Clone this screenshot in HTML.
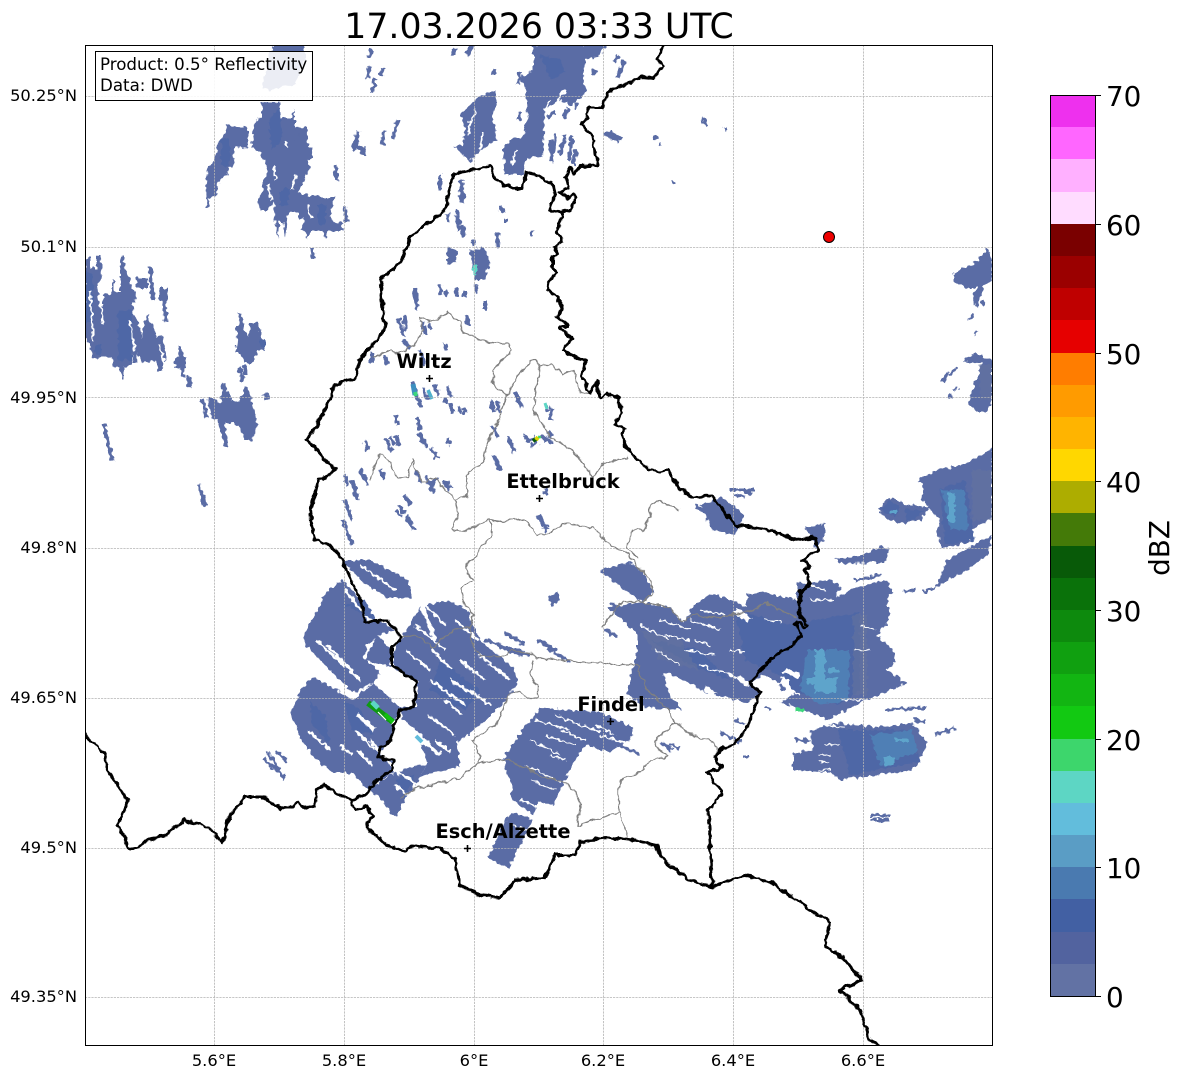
<!DOCTYPE html>
<html><head><meta charset="utf-8"><title>Radar</title>
<style>
html,body{margin:0;padding:0;background:#fff;width:1184px;height:1081px;overflow:hidden}
svg{display:block}
text{font-family:"DejaVu Sans",sans-serif;fill:#000}
.tk{font-size:16.3px}
.cb{font-size:27.8px}
.lb{font-size:19.4px;font-weight:bold;text-anchor:middle}
</style></head><body>
<svg width="1184" height="1081" viewBox="0 0 1184 1081" xmlns="http://www.w3.org/2000/svg">
<defs>
<clipPath id="ax"><rect x="85" y="45" width="907" height="1001"/></clipPath>
<filter id="w" filterUnits="userSpaceOnUse" x="0" y="0" width="1184" height="1081" color-interpolation-filters="sRGB"><feTurbulence type="fractalNoise" baseFrequency=".14" numOctaves="2" seed="4"/><feDisplacementMap in="SourceGraphic" scale="6" xChannelSelector="R" yChannelSelector="G"/></filter>
<filter id="r" filterUnits="userSpaceOnUse" x="0" y="0" width="1184" height="1081" color-interpolation-filters="sRGB"><feTurbulence type="fractalNoise" baseFrequency=".25" numOctaves="1" seed="9"/><feDisplacementMap in="SourceGraphic" scale="7" xChannelSelector="R" yChannelSelector="G"/></filter>
</defs>
<rect width="1184" height="1081" fill="#fff"/>
<g clip-path="url(#ax)">
<!-- radar base -->
<g filter="url(#r)">
<g fill="#5a6ca5">
<polygon points="227,125 248,128 248,148 235,147 233,167 228,168 227,177 222,177 217,188 216,197 208,198 210,208 207,208 206,187 208,167 213,163 218,145 223,135"/>
<polygon points="262,102 280,103 278,118 292,118 295,108 295,127 307,128 308,147 313,148 312,158 307,160 310,167 303,183 298,193 307,195 327,197 335,197 333,205 330,213 333,222 343,223 342,231 327,231 325,239 322,231 310,231 308,239 305,231 302,230 304,217 298,220 298,212 288,212 287,220 285,239 283,222 279,222 278,239 275,220 274,203 267,210 260,210 257,200 263,190 262,182 268,172 265,163 260,152 251,147 255,120 262,118"/>
<polygon points="273,45 305,45 305,60 295,85 270,90 262,88 268,60"/>
<polygon points="87,257 90,257 90,268 97,268 97,255 101,255 102,280 98,282 100,305 103,307 103,295 112,293 112,280 114,280 114,292 120,292 120,268 122,255 124,255 124,267 130,280 132,290 136,292 135,303 132,303 133,313 138,320 142,338 143,328 148,313 152,325 157,337 162,335 166,357 162,372 158,370 155,360 142,363 138,353 137,363 133,363 132,355 132,365 124,367 124,379 121,379 120,368 113,367 112,357 93,358 91,347 87,340 85,330 85,270"/>
<rect x="136" y="278" width="12" height="10"/><rect x="159" y="288" width="9" height="12"/><rect x="175" y="357" width="10" height="11"/>
<polygon points="235,325 242,323 248,337 250,323 257,322 262,337 265,350 258,350 252,363 245,363 242,353 235,353 237,337"/>
<polygon points="207,397 213,397 220,403 223,382 232,400 240,400 245,387 248,387 258,425 252,440 245,440 240,427 232,423 225,423 228,447 225,447 217,420 212,417"/>
<polygon points="533,45 607,45 600,55 585,60 583,85 587,90 580,98 572,105 558,100 545,110 543,157 527,158 523,175 505,175 503,150 513,137 522,137 528,120 525,85 520,78 533,70"/>
<polygon points="477,98 495,90 498,103 492,113 497,140 477,153 470,162 455,147 463,145 465,127 460,115"/>
<polygon points="603,135 610,130 621,137 618,143"/>
<polygon points="447,247 457,250 456,262 447,265"/>
<polygon points="470,250 484,248 490,262 484,280 474,280"/>
<!-- lower-left -->
<polygon points="290,712 303,687 313,677 337,690 353,700 373,683 400,707 395,723 390,742 378,753 393,762 392,773 367,790 353,773 333,773 313,757 300,737"/>
<polygon points="393,773 427,763 420,777 413,787 395,817 380,800 370,790"/>
<polygon points="304,638 313,617 328,590 343,580 363,603 367,623 380,620 395,630 380,635 367,645 363,657 380,673 373,683 353,693 323,663 307,647"/>
<polygon points="343,560 370,560 408,580 412,598 390,598 380,593 363,583"/>
<polygon points="393,653 420,607 447,600 467,610 480,640 513,667 518,683 500,707 470,733 457,743 460,767 430,773 420,777 427,763 417,730 403,720 400,707 417,707 417,682 393,667"/>
<polygon points="365,660 377,635 393,650 390,667"/>
<polygon points="540,708 600,712 635,728 630,740 610,752 585,745 570,770 553,805 537,802 533,815 510,797 513,787 507,773 503,760 520,733"/>
<polygon points="510,812 533,820 513,860 508,868 488,858"/>
<polygon points="548,597 558,592 560,600 552,606"/>
<polygon points="600,570 630,562 643,573 653,592 643,602 625,590"/>
<!-- right -->
<polygon points="607,607 643,602 672,608 683,623 697,602 713,593 747,607 747,595 763,592 797,600 797,583 833,580 840,587 837,597 857,587 887,580 893,593 887,600 890,620 877,635 893,650 895,663 887,670 907,683 860,703 827,720 803,710 780,702 800,690 800,680 783,675 780,683 763,675 750,683 760,692 747,703 707,693 677,677 663,673 670,697 683,710 643,707 627,693 637,650 637,633"/>
<polygon points="810,730 837,723 877,727 913,723 927,743 920,760 912,770 867,777 838,780 833,773 793,770 793,755 813,750"/>
<polygon points="700,505 722,497 745,515 735,535 712,530"/>
<polygon points="805,527 825,523 825,538 815,548"/>
<polygon points="918,480 937,470 963,465 992,448 992,517 973,530 970,542 942,548 937,532 940,520 922,500 923,483"/>
<polygon points="878,510 888,497 893,502 923,507 930,507 920,520 905,523 900,523 888,520"/>
<polygon points="947,560 992,535 988,555 967,570 935,588"/>
<polygon points="835,558 860,556 880,547 890,548 885,563 867,563 840,564"/>
<polygon points="952,275 963,268 977,262 987,248 992,258 992,280 983,287 977,307 972,297 977,288 967,288 955,282"/>
<polygon points="963,362 975,353 992,360 992,400 987,412 977,412 968,402 975,383 982,363"/>
<polygon points="885,505 892,497 902,503 899,516 888,515"/>
</g>
<!-- small radar cells -->
<path fill="none" stroke="#5a6ca5" stroke-width="4" d="M297,130L299,155 M150,267L153,300 M164,300L166,323 M180,345L183,378 M188,378L190,388 M335,165L337,180 M345,205L346,222 M312,248L313,258 M358,132L354,150 M352,145L364,150 M362,150L364,155 M372,50L369,57 M370,66L367,78 M383,68L381,76 M375,78L372,93 M398,120L393,138 M385,130L382,145 M240,313L242,325 M239,367L243,380 M244,366L246,375 M104,424L112,460 M202,398L207,418 M265,393L267,400 M188,375L191,386 M198,484L206,506 M230,400L250,440 M455,48L452,56 M472,45L467,55 M495,70L492,75 M520,72L518,85 M618,55L614,62 M624,60L618,78 M595,70L592,75 M550,140L553,155 M556,135L551,162 M565,135L560,155 M572,135L569,160 M576,150L573,165 M520,112L519,120 M543,112L542,120 M577,102L575,108 M555,112L548,117 M569,108L563,118 M447,213L448,222 M462,180L461,200 M457,210L459,230 M462,225L464,238 M473,240L474,247 M463,193L462,203 M497,233L498,247 M440,175L440,190 M500,205L503,213 M506,218L506,223 M532,230L531,236 M440,285L441,295 M456,288L457,297 M465,290L465,297 M415,288L417,310 M404,316L406,330 M422,322L426,335 M445,290L448,295 M466,315L468,325 M475,285L477,292 M485,300L485,310 M372,352L372,363 M385,355L387,365 M398,318L404,336 M402,340L410,348 M420,350L425,365 M445,343L446,350 M445,398L447,404 M428,324L432,330 M464,408L466,414 M412,382L418,400 M423,388L428,400 M435,385L438,395 M447,385L451,398 M418,397L421,407 M450,403L453,412 M458,405L461,413 M395,415L398,425 M396,435L399,445 M417,417L420,430 M419,433L427,448 M431,448L437,458 M447,437L450,445 M416,470L420,482 M390,437L395,445 M385,438L392,452 M365,440L368,450 M490,400L495,412 M497,402L500,413 M515,392L522,408 M492,425L498,438 M508,436L514,452 M493,455L500,470 M443,481L449,490 M436,477L431,487 M425,476L434,492 M445,481L451,488 M404,495L411,505 M400,507L404,513 M406,515L414,530 M552,408L550,420 M524,435L529,441 M528,442L535,437 M530,446L538,442 M545,436L552,444 M546,407L548,412 M543,435L546,442 M548,432L552,437 M544,488L547,495 M538,515L546,527 M544,527L548,530 M345,475L348,485 M343,520L352,545 M360,470L368,485 M380,470L385,480 M352,480L358,500 M345,500L352,520"/>
<path fill="none" stroke="#5a6ca5" stroke-width="3" d="M276,750L287,762 M267,752L280,770 M275,765L285,780 M395,510L402,517 M885,710L925,708 M870,815L890,816 M870,820L890,820 M795,740L810,741 M800,752L840,754 M945,580L955,570 M956,368L950,375 M948,372L943,382 M973,315L968,320 M977,330L974,335 M985,300L982,305 M955,390L958,387 M947,398L952,396 M855,580L872,578 M904,592L916,589 M923,592L935,588 M870,577L880,575 M935,735L955,728 M915,720L925,722 M695,505L715,520 M730,490L755,490 M735,495L745,497 M880,508L905,510 M703,120L706,126 M725,127L726,130 M672,180L675,184 M655,135L656,140 M660,143L661,146 M707,122L703,118 M823,531L820,540 M745,490L752,494 M810,535L822,540 M880,555L890,552 M620,610L660,635 M605,630L617,637 M610,603L650,625 M620,745L640,755 M660,742L672,750 M670,745L680,748 M720,732L740,742 M743,757L750,757 M735,720L745,725 M765,706L770,710 M780,685L785,690 M485,640L530,655 M495,645L522,655 M538,640L556,650 M547,648L570,662 M505,633L525,645 M263,758L285,778"/>
<!-- darker patches -->
<g fill="#4e67a6">
<rect x="221" y="138" width="9" height="28"/>
<polygon points="268,120 280,108 283,140 272,150"/><polygon points="280,190 290,188 288,205 280,205"/><rect x="318" y="205" width="8" height="20"/>
<rect x="85" y="272" width="8" height="50"/><rect x="118" y="310" width="14" height="50"/><rect x="95" y="345" width="6" height="10"/><rect x="260" y="340" width="5" height="8"/>
<polygon points="540,55 560,58 565,72 550,80"/>
<polygon points="343,700 360,710 375,735 352,730"/><polygon points="310,700 325,715 330,745 312,725"/><polygon points="365,600 375,620 345,605"/>
<polygon points="440,660 480,690 465,710 430,690"/><polygon points="395,780 415,775 405,800"/>
<polygon points="650,640 700,650 730,680 690,665"/><polygon points="735,610 790,625 790,680 745,660"/>
<polygon points="790,625 860,612 860,690 840,705 790,690"/><polygon points="838,730 910,730 920,762 850,775"/><polygon points="940,490 965,480 975,540 945,545"/><polygon points="880,510 890,500 900,508 895,517"/><polygon points="905,509 925,510 915,520 906,520"/>
</g>
<!-- mid grey tint -->
<g fill="#65749f" opacity=".6">
<rect x="853" y="615" width="14" height="80"/><polygon points="640,630 680,640 700,670 660,660"/><rect x="972" y="470" width="20" height="50"/><rect x="980" y="365" width="12" height="35"/>
</g>
<!-- light cores -->
<g fill="#4f7fb5"><polygon points="808,650 850,650 848,700 820,705 800,690"/><polygon points="870,735 912,730 918,752 880,765"/><polygon points="942,490 965,490 968,530 950,530"/></g>
<g fill="#5ea4cb"><rect x="815" y="650" width="10" height="42"/><rect x="828" y="668" width="12" height="5"/><rect x="825" y="678" width="12" height="15"/><rect x="806" y="678" width="14" height="6"/><rect x="884" y="757" width="10" height="8"/><rect x="895" y="738" width="14" height="4"/><rect x="948" y="492" width="7" height="30"/><rect x="890" y="510" width="6" height="4"/></g>
<rect x="796" y="708" width="8" height="3.5" fill="#3dd67c"/>
<rect x="473" y="265" width="4" height="10" fill="#5dd6c4"/>
<!-- white gaps -->
<g fill="none" stroke="#fff">
<path stroke-width="2" d="M98,285L103,325 M90,290L93,340 M130,320L135,350 M160,345L165,368 M293,225L291,232 M274,165L276,180 M295,175L292,190 M285,140L288,148 M268,185L272,200 M308,205L311,218 M335,205L338,220 M530,50L526,40 M565,90L558,100 M545,110L550,100 M516,150L512,165 M470,120L468,135 M483,132L480,150 M476,110L470,125 M290,228L290,215"/>
<path stroke-width="2.500" d="M317,640L345,667 M327,645L360,680 M345,590L365,615 M350,575L375,595 M360,565L395,590 M378,610L400,625 M308,730L330,750 M355,730L375,750 M340,745L352,755 M357,750L372,765 M370,740L400,775 M392,720L410,730 M403,730L425,745 M405,745L420,755 M425,605L445,625 M415,625L445,650 M405,650L430,670 M432,650L452,670 M430,680L465,705 M450,680L475,695 M445,700L462,715 M428,715L455,735 M435,740L450,752 M460,660L485,680 M480,655L510,680 M455,620L478,640 M470,690L490,705 M415,600L425,610 M395,770L418,785 M408,795L395,785 M375,795L388,810"/>
<path stroke-width="1.500" d="M535,720L570,730 M555,715L600,732 M530,740L560,755 M545,735L575,745 M525,765L560,782 M530,780L555,790 M550,755L565,760 M560,730L585,740 M595,725L615,735 M600,735L630,745 M520,800L540,808 M510,825L530,832 M612,755L640,762 M640,625L670,640 M660,620L690,630 M655,650L680,665 M665,635L690,640 M690,620L720,630 M685,650L715,655 M695,640L710,645 M700,665L720,672 M720,670L750,685 M730,650L745,652 M765,620L780,622 M770,590L795,595 M810,600L835,600 M795,580L825,590 M860,625L875,630 M840,700L870,700 M855,650L870,650 M818,725L845,727 M825,745L840,745 M818,755L830,755 M818,762L830,762 M818,770L830,770 M790,690L800,695 M700,610L725,615"/>
<path stroke-width="5" d="M784,670L800,676 M705,688L715,695 M738,678L748,684 M735,610L750,620"/>
<path stroke-width="4" d="M385,715L397,728 M358,715L375,730 M412,730L440,755 M420,600L435,640 M500,710L515,715"/>
</g>
</g>
<!-- green streak -->
<path d="M368,703L393,722" stroke="#0f9a12" stroke-width="6" fill="none"/><path d="M372,702L378,708" stroke="#5dd6c4" stroke-width="5" fill="none"/><path d="M378,712L386,720" stroke="#fff" stroke-width="1.2" fill="none"/><path d="M385,714L393,722" stroke="#12c012" stroke-width="4" fill="none"/>
<path d="M416,736L422,742" stroke="#62bddc" stroke-width="4" fill="none"/>
<path d="M413,384L415,395" stroke="#3d8fc0" stroke-width="5" fill="none"/><path d="M415,392L416,396" stroke="#3dd67c" stroke-width="4" fill="none"/><path d="M428,390L432,399" stroke="#4fb0cc" stroke-width="3.5" fill="none"/>
<path d="M545,403L547,409" stroke="#5dd6c4" stroke-width="3" fill="none"/>
<path d="M533,441L536,439" stroke="#085a08" stroke-width="4" fill="none"/><path d="M536,440L538,437" stroke="#d9d300" stroke-width="4" fill="none"/><path d="M539,438L540,436" stroke="#3dd66c" stroke-width="3" fill="none"/>
<!-- grid -->
<g stroke="#b4b4b4" stroke-width=".8" stroke-dasharray="2.2 1" fill="none">
<path d="M214.500,45V1046M344.500,45V1046M474.500,45V1046M603.500,45V1046M733.500,45V1046M863.500,45V1046"/>
<path d="M85,96.500H992M85,247.500H992M85,397.500H992M85,548.500H992M85,698.500H992M85,848.500H992M85,997.500H992"/>
</g>
<!-- grey cantons -->
<g fill="none" stroke="#808080" stroke-width="1.3" stroke-linejoin="round" filter="url(#w)">
<polyline points="372,358 380,355 390,350 400,353 415,345 423,330 420,317 432,322 448,312 460,322 463,332 487,342 497,343 508,343 512,350 493,370 493,383 507,395 498,423 487,443 483,463 468,473 467,497 455,500 458,513 453,528 462,532 490,520 505,522 513,517 527,522 537,535 553,532 563,523 593,527 602,537 613,547 628,555 650,580 653,593 643,602 623,602 605,623 603,627"/>
<polyline points="370,480 380,453 390,463 398,478 408,477 412,460 422,482 435,478 443,487 455,500"/>
<polyline points="507,395 520,372 535,360 540,365 533,410 543,425 550,437 573,450 593,477 603,463 628,457"/>
<polyline points="540,365 553,365 562,375 573,370 580,393 590,394"/>
<polyline points="680,510 660,500 650,505 650,517 643,530 632,530 627,548 637,557"/>
<polyline points="643,602 670,608 682,623 693,615 715,618 747,612 767,603 797,618"/>
<polyline points="490,520 492,537 480,548 475,560 467,563 468,573 472,580 462,587 463,603 473,615 470,628 458,628 440,640 433,648 427,643 413,635 402,638"/>
<polyline points="470,628 473,647 480,655 502,657 513,650 530,653 538,658 580,662 600,662 613,665 640,665 638,672 650,693 668,710 675,723 695,737 713,742 718,748 715,757"/>
<polyline points="533,660 530,675 538,688 537,698 527,698 518,690 508,697 497,723 473,740 480,757 478,763 460,778 418,788 400,798"/>
<polyline points="478,763 507,760 527,768 543,777 560,780 575,790 580,805 577,825 620,812 627,838"/>
<polyline points="675,723 655,740 657,748 668,757 650,760 640,773 623,777 618,790 618,812"/>
</g>
<!-- black borders -->
<g fill="none" stroke="#000" stroke-width="3" stroke-linejoin="round" filter="url(#w)">
<polyline points="85,735 105,755 108,772 128,800 118,825 130,850 150,840 165,835 185,820 210,828 222,842 230,815 245,797 262,797 280,808 293,807 298,803 307,808 315,806 317,788 325,785 335,793 353,800 352,805 356,810 367,806 373,817 367,822 368,828 387,846 405,851 415,846 427,848 437,847 447,853 455,858 460,885 480,895 500,898 515,880 545,878 555,855 575,855 580,842 610,838 635,840 655,845 665,862 690,880 712,887 730,880 745,875 770,882 790,895 810,910 830,922 825,945 845,960 862,980 840,990 860,1010 870,1040 880,1046"/>
<polyline points="353,800 365,795 378,780 392,770 393,760 378,757 380,748 390,742 395,723 400,710 413,708 417,682 392,665 392,647 402,638 387,620 365,622 362,603 342,560 330,545 315,540 310,515 318,480 330,475 335,470 308,440 330,400 335,385 355,378 360,360 385,330 380,280 400,262 412,235 445,210 453,175 470,170 490,165 495,180 512,188 522,188 527,173 537,175 552,183 555,195 550,210 562,212 570,210 575,203 573,195 568,198 560,192 568,188 565,177 570,168 575,173 580,166 598,165 595,153 593,137 582,125 587,118 588,108 602,108 607,93 613,90 628,83 642,77 653,78 663,67 658,60 660,50 665,45"/>
<polyline points="562,212 563,217 557,230 562,242 555,248 558,253 552,257 552,267 557,273 548,282 547,288 557,298 562,307 558,317 568,325 560,328 572,338 563,350 585,362 582,377 590,393 597,380 598,392 602,398 607,393 618,398 622,413 615,423 625,428 622,437 630,452 643,465 650,470 660,472 668,470 680,490 695,497 712,496 735,525 770,530 795,540 815,537 818,550 803,560 810,565 805,570 810,583 800,592 799,615 808,625 805,627 798,622 795,625 802,635 790,647 773,657 763,668 750,682 752,687 760,692 750,720 745,731 733,745 722,748 715,757 722,768 713,770 707,773 722,792 718,800 708,810 712,886"/>
</g>
<!-- city markers -->
<path stroke="#000" stroke-width="1.600" fill="none" d="M426,378.500H433M429.500,375V382M536,498.500H543M539.500,495V502M607,721.500H614M610.500,718V725M464,848.500H471M467.500,845V852"/>
<circle cx="829" cy="237" r="5.500" fill="#ee0000" stroke="#000" stroke-width="1"/>
<!-- legend -->
<rect x="95.500" y="51.500" width="217" height="49" fill="#fff" fill-opacity=".88" stroke="#000" stroke-width="1"/>
</g>
<text x="100" y="70" style="font-size:16.67px">Product: 0.5° Reflectivity</text>
<text x="100" y="91" style="font-size:16.67px">Data: DWD</text>
<text x="424" y="368" class="lb">Wiltz</text>
<text x="563" y="488" class="lb">Ettelbruck</text>
<text x="611" y="711" class="lb">Findel</text>
<text x="503" y="838" class="lb">Esch/Alzette</text>
<rect x="85.500" y="45.500" width="907" height="1000" fill="none" stroke="#000" stroke-width="1"/>
<text x="539" y="38" text-anchor="middle" style="font-size:34.7px">17.03.2026 03:33 UTC</text>
<g class="tk" text-anchor="end">
<text x="77" y="101">50.25°N</text><text x="77" y="252">50.1°N</text><text x="77" y="403">49.95°N</text><text x="77" y="553">49.8°N</text><text x="77" y="703">49.65°N</text><text x="77" y="853">49.5°N</text><text x="77" y="1002">49.35°N</text>
</g>
<g class="tk" text-anchor="middle">
<text x="214" y="1066">5.6°E</text><text x="344" y="1066">5.8°E</text><text x="474" y="1066">6°E</text><text x="603" y="1066">6.2°E</text><text x="733" y="1066">6.4°E</text><text x="863" y="1066">6.6°E</text>
</g>
<!-- colorbar -->
<g shape-rendering="crispEdges">
<rect x="1051" y="95" width="45" height="33" fill="#ee30ee"/><rect x="1051" y="127" width="45" height="33" fill="#ff66ff"/><rect x="1051" y="159" width="45" height="33" fill="#ffb0ff"/><rect x="1051" y="192" width="45" height="33" fill="#ffdcff"/>
<rect x="1051" y="224" width="45" height="33" fill="#7a0000"/><rect x="1051" y="256" width="45" height="33" fill="#9b0000"/><rect x="1051" y="288" width="45" height="33" fill="#bf0000"/><rect x="1051" y="320" width="45" height="33" fill="#e60000"/>
<rect x="1051" y="353" width="45" height="33" fill="#ff7d00"/><rect x="1051" y="385" width="45" height="33" fill="#ff9b00"/><rect x="1051" y="417" width="45" height="33" fill="#ffb400"/><rect x="1051" y="449" width="45" height="33" fill="#ffd700"/>
<rect x="1051" y="481" width="45" height="33" fill="#adad00"/><rect x="1051" y="513" width="45" height="33" fill="#447a08"/><rect x="1051" y="546" width="45" height="33" fill="#085a08"/><rect x="1051" y="578" width="45" height="33" fill="#0a720a"/>
<rect x="1051" y="610" width="45" height="33" fill="#0d8a0d"/><rect x="1051" y="642" width="45" height="33" fill="#10a010"/><rect x="1051" y="674" width="45" height="33" fill="#12b512"/><rect x="1051" y="706" width="45" height="33" fill="#12c912"/>
<rect x="1051" y="739" width="45" height="33" fill="#3dd66c"/><rect x="1051" y="771" width="45" height="33" fill="#5dd6c4"/><rect x="1051" y="803" width="45" height="33" fill="#62bddc"/><rect x="1051" y="835" width="45" height="33" fill="#5a9dc5"/>
<rect x="1051" y="867" width="45" height="33" fill="#4a7ab0"/><rect x="1051" y="899" width="45" height="33" fill="#4260a3"/><rect x="1051" y="932" width="45" height="33" fill="#52639f"/><rect x="1051" y="964" width="45" height="32" fill="#6272a4"/>
<rect x="1050.500" y="95.500" width="45" height="901" fill="none" stroke="#000" stroke-width="1"/>
<path stroke="#000" stroke-width="1" d="M1096,95.500h5M1096,224.500h5M1096,353.500h5M1096,481.500h5M1096,610.500h5M1096,739.500h5M1096,867.500h5M1096,996.500h5"/>
</g>
<g class="cb">
<text x="1106" y="106">70</text><text x="1106" y="235">60</text><text x="1106" y="364">50</text><text x="1106" y="492">40</text><text x="1106" y="621">30</text><text x="1106" y="750">20</text><text x="1106" y="878">10</text><text x="1106" y="1007">0</text>
<text transform="translate(1169,548) rotate(-90)" text-anchor="middle">dBZ</text>
</g>
</svg>
</body></html>
